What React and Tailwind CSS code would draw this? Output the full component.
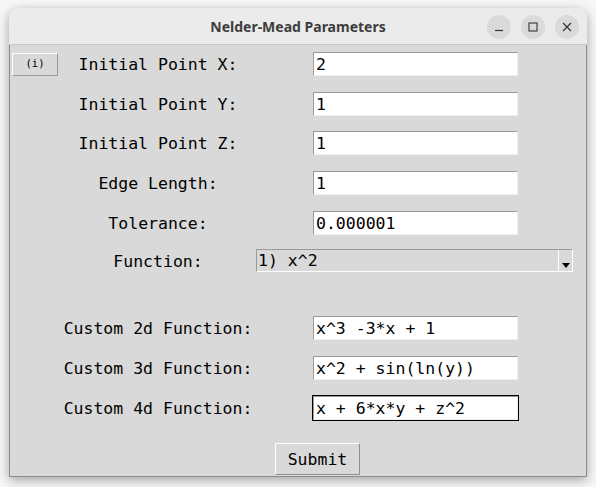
import React from "react";

const mono = { fontFamily: '"DejaVu Sans Mono", "Liberation Mono", monospace' };

function Entry({ value, focused }) {
  return (
    <div
      className={
        "h-[24px] w-[205px] bg-white border border-t-[#9a9a9a] border-l-[#9a9a9a] border-b-[#efefef] border-r-[#efefef] flex items-center pl-[2px] pt-[2px] text-[16.5px] leading-none text-black whitespace-pre " +
        (focused ? "outline outline-1 outline-black" : "")
      }
      style={mono}
    >
      {value}
    </div>
  );
}

function Row({ label, value, focused, first, className = "" }) {
  return (
    <div className={"grid grid-cols-[296px_1fr] items-center " + className}>
      <div className="grid items-center">
        {first && (
          <div className="col-start-1 row-start-1 justify-self-start ml-[2px] w-[46px] h-[23px] border border-t-white border-l-white border-b-[#9a9a9a] border-r-[#9a9a9a] flex items-center justify-center text-[10.5px] text-black" style={mono}>
            (i)
          </div>
        )}
        <div className="col-start-1 row-start-1 justify-self-center pt-[3px] text-[16.5px] leading-none text-black whitespace-pre" style={mono}>
          {label}
        </div>
      </div>
      <div className="pl-[7px]">
        <Entry value={value} focused={focused} />
      </div>
    </div>
  );
}

export default function App() {
  return (
    <div className="w-[596px] h-[487px] bg-[#f7f7f7] overflow-hidden pt-[8px] pl-[9px]">
      <div className="w-[578px] h-[469px] rounded-t-[11px] flex flex-col shadow-[0_3px_12px_rgba(0,0,0,0.35)]">
        {/* title bar */}
        <div className="h-[37px] bg-[#ebebeb] rounded-t-[11px] border-b border-[#c9c9c9] flex items-center relative">
          <div className="flex-1 text-center text-[14px] font-bold text-[#3d3d3d] pt-[1px]" style={{ fontFamily: '"Noto Sans", "Open Sans", sans-serif' }}>
            Nelder-Mead Parameters
          </div>
          <div className="absolute right-[8px] top-[7px] flex gap-[10px]">
            <div className="w-[24px] h-[24px] rounded-full bg-[#dadada] flex items-center justify-center">
              <svg width="10" height="10" viewBox="0 0 10 10"><path d="M1 8.5h8" stroke="#333" strokeWidth="1.2" /></svg>
            </div>
            <div className="w-[24px] h-[24px] rounded-full bg-[#dadada] flex items-center justify-center">
              <svg width="10" height="10" viewBox="0 0 10 10"><rect x="1" y="1" width="8" height="8" fill="none" stroke="#333" strokeWidth="1.1" /></svg>
            </div>
            <div className="w-[24px] h-[24px] rounded-full bg-[#dadada] flex items-center justify-center">
              <svg width="10" height="10" viewBox="0 0 10 10"><path d="M1 1L9 9M9 1L1 9" stroke="#333" strokeWidth="1.2" /></svg>
            </div>
          </div>
        </div>
        {/* content */}
        <div className="flex-1 bg-[#d9d9d9] border border-t-0 border-[#8c8c8c] flex flex-col pt-[7px]">
          <Row first label="Initial Point X:" value="2" />
          <Row label="Initial Point Y:" value="1" className="mt-[16px]" />
          <Row label="Initial Point Z:" value="1" className="mt-[15px]" />
          <Row label="Edge Length:" value="1" className="mt-[16px]" />
          <Row label="Tolerance:" value="0.000001" className="mt-[16px]" />
          {/* function row */}
          <div className="flex items-center mt-[14px]">
            <div className="ml-[88px] w-[120px] pt-[4px] text-center text-[16.5px] leading-none text-black" style={mono}>
              Function:
            </div>
            <div className="ml-[38px] w-[317px] h-[23px] bg-[#d9d9d9] border border-t-[#9a9a9a] border-l-[#9a9a9a] border-b-white border-r-white flex items-center">
              <div className="flex-1 pl-[1px] pt-[2px] text-[16.5px] leading-none text-black whitespace-pre" style={mono}>
                1) x^2
              </div>
              <div className="w-[14px] h-full border-l border-white flex items-end justify-center pb-[3px]">
                <svg width="8" height="5" viewBox="0 0 8 5"><path d="M0 0H8L4 5Z" fill="#000" /></svg>
              </div>
            </div>
          </div>
          <Row label="Custom 2d Function:" value="x^3 -3*x + 1" className="mt-[44px]" />
          <Row label="Custom 3d Function:" value="x^2 + sin(ln(y))" className="mt-[16px]" />
          <Row label="Custom 4d Function:" value="x + 6*x*y + z^2" focused className="mt-[16px]" />
          <div className="mt-[23px] ml-[265px] w-[85px] h-[32px] pt-[3px] border border-t-white border-l-white border-b-[#8f8f8f] border-r-[#8f8f8f] flex items-center justify-center text-[16.5px] leading-none text-black" style={mono}>
            Submit
          </div>
        </div>
      </div>
    </div>
  );
}
